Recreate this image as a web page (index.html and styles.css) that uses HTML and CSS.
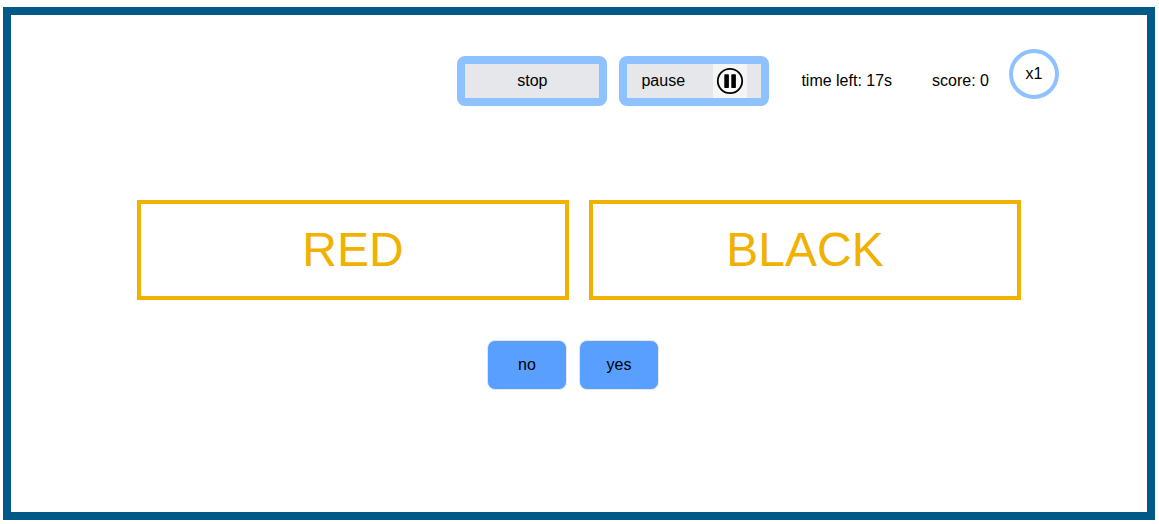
FILE: index.html
```html
<!DOCTYPE html>
<html lang="en">
<head>
<meta charset="utf-8">
<meta name="viewport" content="width=device-width, initial-scale=1">
<title>Color match</title>
<link rel="stylesheet" href="styles.css">
</head>
<body>
<main class="game">
  <header class="toolbar">
    <div class="controls">
      <button class="control" type="button">stop</button>
      <button class="control" type="button">
        <span>pause</span>
        <svg class="pause-icon" viewBox="0 0 34 34" aria-hidden="true">
          <rect width="34" height="34" fill="#f5f5f6"/>
          <circle cx="17" cy="17" r="12.2" fill="#fafafa" stroke="#000" stroke-width="1.8"/>
          <rect x="11.3" y="10.3" width="4.6" height="13.6" rx="0.6"/>
          <rect x="18.3" y="10.3" width="4.6" height="13.6" rx="0.6"/>
        </svg>
      </button>
    </div>
    <div class="stats">
      <span>time left: 17s</span>
      <span>score: 0</span>
    </div>
    <div class="multiplier">x1</div>
  </header>
  <section class="cards">
    <div class="card">RED</div>
    <div class="card">BLACK</div>
  </section>
  <div class="answers">
    <button class="answer" type="button">no</button>
    <button class="answer" type="button">yes</button>
  </div>
</main>
</body>
</html>
```

FILE: styles.css
```css
* {
  box-sizing: border-box;
}

body {
  display: flex;
  min-height: 100vh;
  margin: 0;
  padding: 7px 4px 4px 3px;
  background: #fff;
  color: #000;
  font: 16px/24px "Liberation Sans", Arial, sans-serif;
}

.game {
  flex: 1;
  padding: 34px 88px;
  border: 8px solid #005987;
}

button {
  color: inherit;
  font: inherit;
  cursor: pointer;
}

.toolbar {
  display: flex;
  justify-content: flex-end;
  align-items: flex-start;
}

.controls,
.stats {
  display: flex;
  align-items: center;
  height: 50px;
  margin-top: 7px;
}

.controls {
  gap: 12px;
}

.stats {
  gap: 40px;
  margin-left: 32px;
  margin-right: 20px;
  white-space: nowrap;
}

.control {
  display: flex;
  justify-content: space-around;
  align-items: center;
  width: 150px;
  height: 50px;
  padding: 0;
  border: 8px solid #8ec2ff;
  border-radius: 8px;
  background: #e5e7eb;
}

.pause-icon {
  width: 34px;
  height: 34px;
}

.multiplier {
  display: flex;
  justify-content: center;
  align-items: center;
  width: 50px;
  height: 50px;
  border: 4px solid #8ec2ff;
  border-radius: 50%;
}

.cards {
  display: flex;
  gap: 20px;
  margin: 94px 38px 40px;
}

.card {
  flex: 1 1 0;
  padding: 22px 0;
  border: 4px solid #f0b100;
  color: #f0b100;
  font-size: 48px;
  line-height: 48px;
  text-align: center;
}

.answers {
  display: flex;
  justify-content: center;
  gap: 12px;
  margin-right: 12px;
}

.answer {
  width: 80px;
  height: 50px;
  padding: 0;
  border: 1px solid #e5e7eb;
  border-radius: 8px;
  background: #589fff;
}
```
